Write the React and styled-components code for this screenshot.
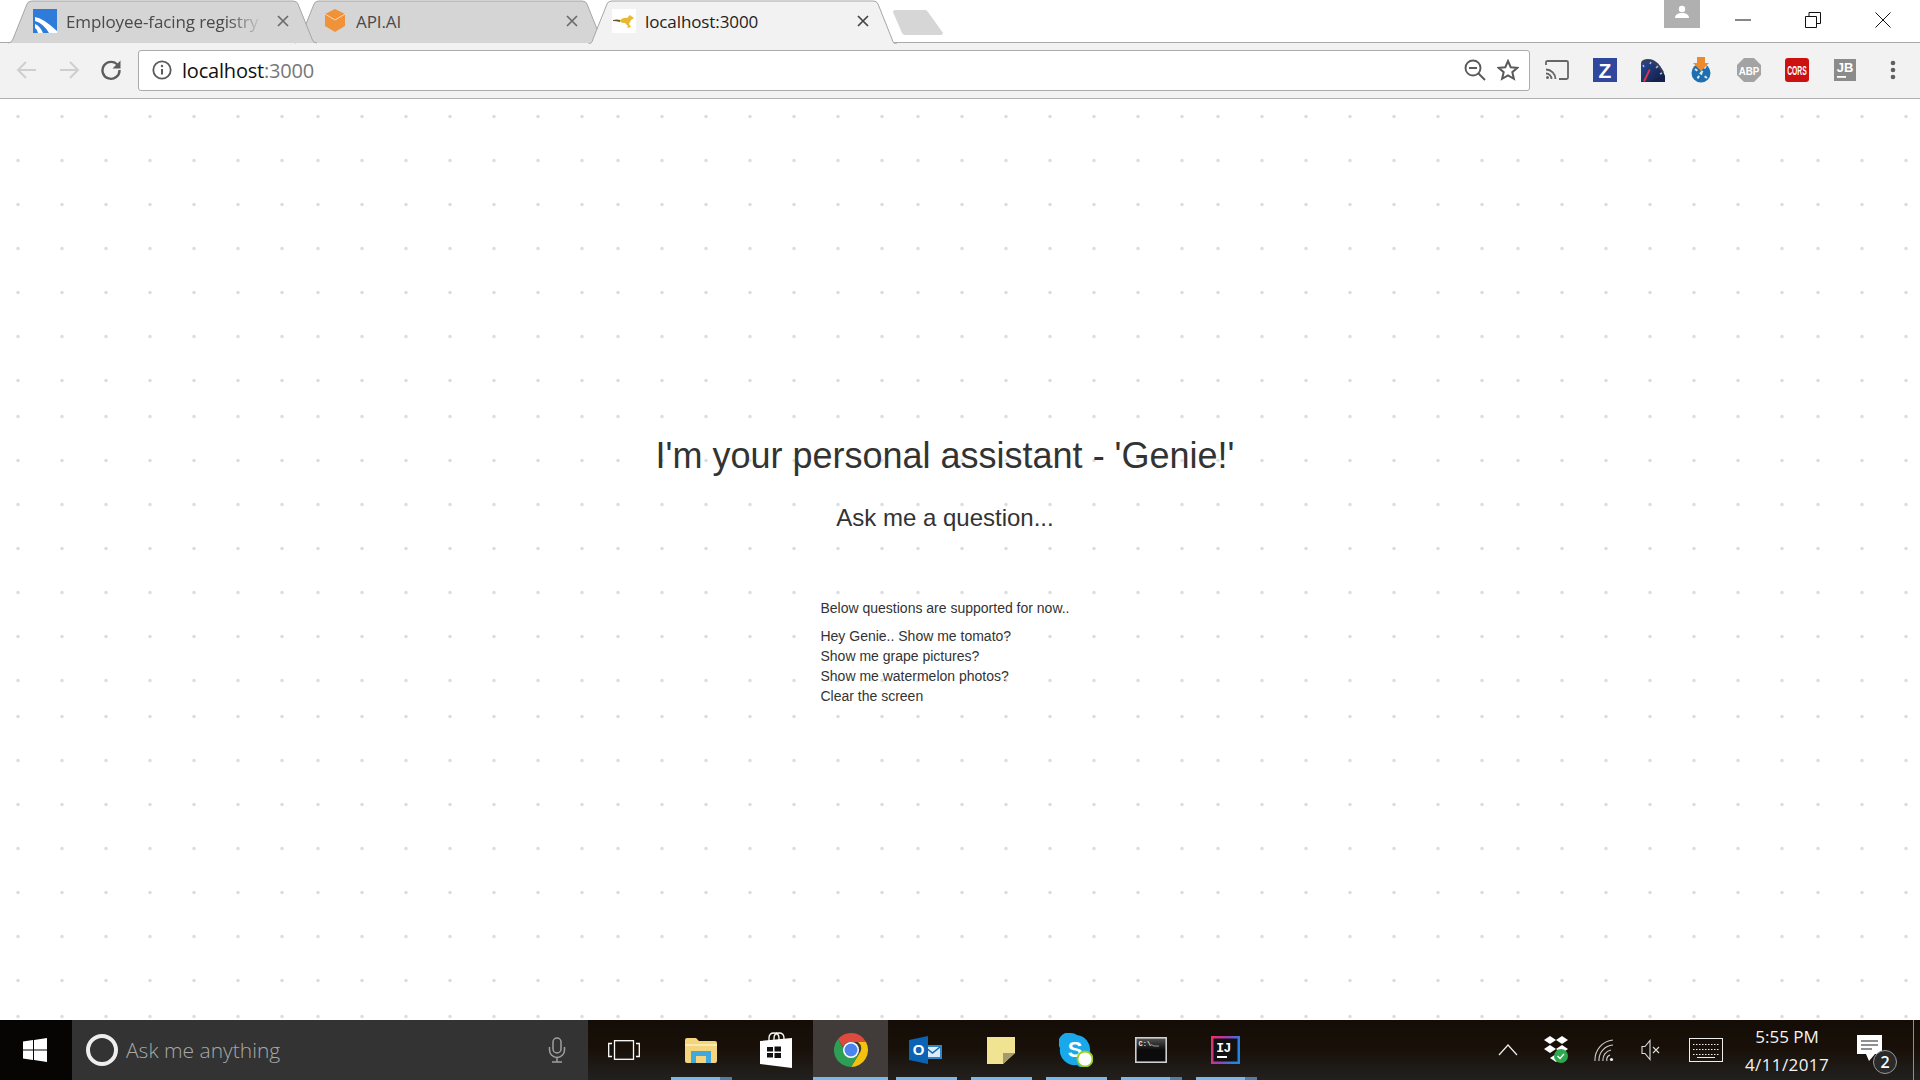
import React from "react";
import styled, { createGlobalStyle } from "styled-components";

const UI_FONT = `"Open Sans", "Noto Sans", sans-serif`;

const makeDotTile = () => {
  let dots = "";
  for (let i = 0; i < 7; i++) {
    for (let j = 0; j < 7; j++) {
      dots += `<circle cx='${18 + 44 * i}' cy='${17.5 + 44 * j}' r='1.7' fill='%23dcdcdc'/>`;
    }
  }
  return `url("data:image/svg+xml,<svg xmlns='http://www.w3.org/2000/svg' width='300' height='300'>${dots}</svg>")`;
};

const tabs = [
  { title: "Employee-facing registry", width: 309, overlap: 0, pad: 25, layer: 2, fade: true, icon: "registry" },
  { title: "API.AI", width: 311, overlap: -22, pad: 28, layer: 1, icon: "api" },
  { title: "localhost:3000", width: 309, overlap: -18, pad: 24, layer: 3, active: true, icon: "roo" },
];

const questions = [
  "Hey Genie.. Show me tomato?",
  "Show me grape pictures?",
  "Show me watermelon photos?",
  "Clear the screen",
];

const App = () => {
  return (
    <>
      <GlobalStyle />
      <Screen>
        <TabStrip>
          {tabs.map((tab) => (
            <Tab key={tab.title} $width={tab.width} $overlap={tab.overlap} $pad={tab.pad} $layer={tab.layer}>
              <TabShape width={tab.width} active={tab.active} />
              <TabIcon>
                <Favicon name={tab.icon} />
              </TabIcon>
              <TabTitle $fade={tab.fade} $active={tab.active}>{tab.title}</TabTitle>
              <TabClose $active={tab.active}>
                <svg width="12" height="12" viewBox="0 0 12 12">
                  <path d="M1 1l10 10M11 1L1 11" stroke="currentColor" strokeWidth="1.7" />
                </svg>
              </TabClose>
            </Tab>
          ))}
          <NewTab>
            <svg width="50" height="26" viewBox="0 0 50 26">
              <path d="M2 0H32Q34 0 35 2L50 23Q50 25 48 25H12Q10 25 9 23L0 2Q0 0 2 0Z" fill="#d6d6d6" />
            </svg>
          </NewTab>
          <WindowArea>
            <Avatar>
              <svg width="16" height="14" viewBox="0 0 16 14">
                <circle cx="8" cy="4" r="3.2" fill="#fff" />
                <path d="M1 13c0-3.5 3-5 7-5s7 1.500 7 5z" fill="#fff" />
              </svg>
            </Avatar>
            <WindowButton>
              <svg width="16" height="2" viewBox="0 0 16 2"><path d="M0 1h16" stroke="#111" strokeWidth="1" /></svg>
            </WindowButton>
            <WindowButton>
              <svg width="16" height="16" viewBox="0 0 16 16" fill="none" stroke="#111">
                <path d="M.5 4.500h11v11H.5z" />
                <path d="M4 4.500V.5h11.500v11H11.500" />
              </svg>
            </WindowButton>
            <WindowButton>
              <svg width="16" height="16" viewBox="0 0 16 16"><path d="M.5.5l15 15M15.500.5l-15 15" stroke="#111" /></svg>
            </WindowButton>
          </WindowArea>
        </TabStrip>

        <Toolbar>
          <NavButton>
            <svg width="22" height="20" viewBox="0 0 22 20" fill="none" stroke="#cfcfcf" strokeWidth="2">
              <path d="M20 10H2M10 2l-8 8 8 8" />
            </svg>
          </NavButton>
          <NavButton>
            <svg width="22" height="20" viewBox="0 0 22 20" fill="none" stroke="#cfcfcf" strokeWidth="2">
              <path d="M2 10h18M12 2l8 8-8 8" />
            </svg>
          </NavButton>
          <NavButton>
            <svg width="22" height="22" viewBox="0 0 22 22" fill="none">
              <path d="M18 6.500A8.500 8.500 0 1 0 19.500 11" stroke="#5c5c5c" strokeWidth="2.400" />
              <path d="M20.500 1.500v8h-8z" fill="#5c5c5c" />
            </svg>
          </NavButton>
          <AddressBar>
            <InfoIcon>
              <svg width="20" height="20" viewBox="0 0 20 20" fill="none">
                <circle cx="10" cy="10" r="8.700" stroke="#5a5a5a" strokeWidth="1.800" />
                <path d="M10 9v5.500" stroke="#5a5a5a" strokeWidth="2" />
                <circle cx="10" cy="6" r="1.200" fill="#5a5a5a" />
              </svg>
            </InfoIcon>
            <AddressText>localhost<span>:3000</span></AddressText>
            <AddressAction>
              <svg width="22" height="22" viewBox="0 0 22 22" fill="none" stroke="#5a5a5a" strokeWidth="1.900">
                <circle cx="9" cy="9" r="7.500" />
                <path d="M5 9h8M14.500 14.500L21 21" />
              </svg>
            </AddressAction>
            <AddressAction>
              <svg width="22" height="22" viewBox="0 0 22 22" fill="none" stroke="#5a5a5a" strokeWidth="2">
                <path d="M11 2l2.700 6.200 6.700.6-5.100 4.400 1.600 6.600L11 16.300 5.100 19.800l1.600-6.600L1.600 8.800l6.700-.6z" />
              </svg>
            </AddressAction>
          </AddressBar>
          <Extensions>
            <ExtensionButton>
              <svg width="24" height="20" viewBox="0 0 24 20" fill="none" stroke="#666" strokeWidth="1.800">
                <path d="M1 5V2.500Q1 1 2.500 1h19Q23 1 23 2.500v15q0 1.500-1.500 1.500H14" />
                <path d="M1 9.500A9.500 9.500 0 0 1 10.500 19M1 13.500A5.500 5.500 0 0 1 6.500 19" />
                <circle cx="2.500" cy="17.500" r="1.500" fill="#666" stroke="none" />
              </svg>
            </ExtensionButton>
            <ExtensionButton>
              <svg width="24" height="24" viewBox="0 0 24 24">
                <rect width="24" height="24" fill="#2f479c" />
                <text x="12" y="20" textAnchor="middle" fontFamily="Liberation Sans" fontWeight="700" fontSize="21" fill="#fff">Z</text>
              </svg>
            </ExtensionButton>
            <ExtensionButton>
              <svg width="24" height="24" viewBox="0 0 24 24">
                <defs>
                  <linearGradient id="dialFill" x1="0" y1="0" x2="1" y2="1">
                    <stop offset="0" stopColor="#2a4a9a" />
                    <stop offset="1" stopColor="#0f1a3d" />
                  </linearGradient>
                </defs>
                <path d="M0 24V5Q1 1 7 1 18 1 24 18v6z" fill="url(#dialFill)" />
                <path d="M1 4Q12 0 22 14" stroke="#3c3f4c" strokeWidth="2" fill="none" />
                <path d="M2 23l6-12 1.500 1L4 24z" fill="#dc3345" />
                <path d="M9 6l1-2M15 10l2-2M19 16l2-1M3 9L2 7" stroke="#a9bce4" strokeWidth="1.600" />
                <path d="M9 24h15v-3Q15 19 9 24z" fill="#16204a" />
              </svg>
            </ExtensionButton>
            <ExtensionButton>
              <svg width="20" height="26" viewBox="0 0 20 26">
                <circle cx="10" cy="16" r="9.500" fill="#1e6fb0" />
                <path d="M4 12l12 9M15 9l-9 13" stroke="#d8e8f4" strokeWidth="2" strokeDasharray="3 3" />
                <path d="M6 0h8v6h4l-8 8-8-8h4z" fill="#ee8a2d" />
              </svg>
            </ExtensionButton>
            <ExtensionButton>
              <svg width="24" height="24" viewBox="0 0 24 24">
                <path d="M7 0h10l7 7v10l-7 7H7l-7-7V7z" fill="#a3a3a3" />
                <text transform="translate(12 16.500) scale(0.85 1)" textAnchor="middle" fontFamily="Liberation Sans" fontWeight="700" fontSize="11.500" fill="#fff">ABP</text>
              </svg>
            </ExtensionButton>
            <ExtensionButton>
              <svg width="24" height="24" viewBox="0 0 24 24">
                <rect width="24" height="24" rx="3" fill="#cc1111" />
                <text transform="translate(12 17) scale(0.52 1)" textAnchor="middle" fontFamily="Liberation Sans" fontWeight="700" fontSize="13" fill="#fff">CORS</text>
              </svg>
            </ExtensionButton>
            <ExtensionButton>
              <svg width="22" height="22" viewBox="0 0 22 22">
                <rect width="22" height="22" fill="#8b8b8b" />
                <text x="11" y="13" textAnchor="middle" fontFamily="Liberation Sans" fontWeight="700" fontSize="13" fill="#fff">JB</text>
                <rect x="3" y="17" width="9" height="1.800" fill="#fff" />
              </svg>
            </ExtensionButton>
            <ExtensionButton>
              <svg width="6" height="20" viewBox="0 0 6 20">
                <circle cx="3" cy="3" r="2.300" fill="#5f5f5f" />
                <circle cx="3" cy="10" r="2.300" fill="#5f5f5f" />
                <circle cx="3" cy="17" r="2.300" fill="#5f5f5f" />
              </svg>
            </ExtensionButton>
          </Extensions>
        </Toolbar>

        <Main>
          <Heading>I'm your personal assistant - 'Genie!'</Heading>
          <SubHeading>Ask me a question...</SubHeading>
          <Supported>
            <SupportedLead>Below questions are supported for now..</SupportedLead>
            {questions.map((q) => (
              <SupportedItem key={q}>{q}</SupportedItem>
            ))}
          </Supported>
        </Main>

        <Taskbar>
          <StartButton>
            <svg width="24" height="24" viewBox="0 0 24 24" fill="#fff">
              <path d="M0 3.400l10-1.400v9.500H0zM11 1.900L24 0v11.500H11zM0 12.500h10V22L0 20.600zM11 12.500h13V24l-13-1.900z" />
            </svg>
          </StartButton>
          <SearchBox>
            <Cortana />
            <SearchText>Ask me anything</SearchText>
            <MicIcon>
              <svg width="18" height="26" viewBox="0 0 18 26" fill="none" stroke="#a0a0a0" strokeWidth="1.500">
                <rect x="5" y="1" width="8" height="15" rx="4" />
                <path d="M1.500 10v3a7.500 7.500 0 0 0 15 0v-3M9 20.500V25M4 25h10" />
              </svg>
            </MicIcon>
          </SearchBox>
          <AppButton $shift={-2}>
            <svg width="32" height="20" viewBox="0 0 32 20" fill="none" stroke="#fff" strokeWidth="1.300">
              <rect x="6.500" y=".7" width="19" height="18.600" />
              <path d="M4 3.500H.7v13H4M28 3.500h3.300v13H28" />
            </svg>
          </AppButton>
          <AppButton $running $stacked>
            <svg width="32" height="26" viewBox="0 0 32 26">
              <path d="M0 3Q0 1 2 1h9l3 3h16q2 0 2 2v18q0 2-2 2H2q-2 0-2-2z" fill="#f4d47c" />
              <path d="M0 7h32v2H0z" fill="#fbe9ae" />
              <path d="M6 14h20v12h-5v-7H11v7H6z" fill="#3fa9dd" />
            </svg>
          </AppButton>
          <AppButton>
            <svg width="32" height="36" viewBox="0 0 32 36">
              <path d="M9 9V6q0-5 5-5t5 5v3M14 8V6q0-5 5-5t5 5v3" fill="none" stroke="#fff" strokeWidth="1.300" />
              <path d="M0 9l32-3v30L0 32z" fill="#fff" />
              <path d="M7 15h6v4.500H7zM14.500 14.500h6.500v5h-6.500zM7 21h6v4.500H7zM14.500 21h6.500v5h-6.500z" fill="#111" />
            </svg>
          </AppButton>
          <AppButton $active $running>
            <svg width="34" height="34" viewBox="0 0 34 34">
              <path d="M17 0a17 17 0 0 1 15 9H17a8 8 0 0 0-8 5L4 6a17 17 0 0 1 13-6z" fill="#dd4b3e" />
              <path d="M32 9a17 17 0 0 1-15 25l8-13a8 8 0 0 0-1-12z" fill="#f4c20d" />
              <path d="M17 34A17 17 0 0 1 4 6l8 14a8 8 0 0 0 13 1l-8 13z" fill="#2f9e55" />
              <circle cx="17" cy="17" r="8" fill="#fff" />
              <circle cx="17" cy="17" r="6.500" fill="#4a84ec" />
            </svg>
          </AppButton>
          <AppButton $running>
            <svg width="33" height="28" viewBox="0 0 33 28">
              <path d="M14 9h19v14H14z" fill="#2e86c9" />
              <path d="M16 11h15v10H16z" fill="#d8ecfa" />
              <path d="M16 11l7.500 6 7.500-6" fill="none" stroke="#1766a8" strokeWidth="1.500" />
              <path d="M0 4l19-4v28L0 24z" fill="#0b63b4" />
              <text x="9.500" y="19" textAnchor="middle" fontFamily="Liberation Sans" fontWeight="700" fontSize="15" fill="#fff">O</text>
            </svg>
          </AppButton>
          <AppButton $running>
            <svg width="28" height="27" viewBox="0 0 28 27">
              <path d="M0 0h28v16L16 27H0z" fill="#f0e391" />
              <path d="M28 16H16v11z" fill="#a49a6a" />
            </svg>
          </AppButton>
          <AppButton $running>
            <svg width="34" height="34" viewBox="0 0 34 34">
              <path d="M12 0a10 10 0 0 1 6 2 15 15 0 0 1 13 17 9 9 0 0 1-13 13A15 15 0 0 1 1 15 10 10 0 0 1 12 0z" fill="#19a9ea" />
              <text x="16" y="24" textAnchor="middle" fontFamily="Liberation Sans" fontWeight="700" fontSize="22" fill="#fff">S</text>
              <circle cx="26" cy="26" r="7.500" fill="#fdfdfd" stroke="#9acd1e" strokeWidth="1.800" />
            </svg>
          </AppButton>
          <AppButton $running $stacked>
            <svg width="32" height="26" viewBox="0 0 32 26">
              <defs>
                <linearGradient id="cmdFill" x1="0" y1="0" x2="0" y2="1">
                  <stop offset="0" stopColor="#555" />
                  <stop offset="0.500" stopColor="#0b0b0b" />
                  <stop offset="1" stopColor="#0b0b0b" />
                </linearGradient>
              </defs>
              <rect x=".8" y=".8" width="30.400" height="24.400" fill="url(#cmdFill)" stroke="#cfcfcf" strokeWidth="1.600" />
              <text x="3.500" y="9" fontFamily="Liberation Mono" fontWeight="700" fontSize="7" fill="#e8e8e8">C:\</text>
              <path d="M16 7.500l3 1.500h5" stroke="#999" fill="none" />
            </svg>
          </AppButton>
          <AppButton $running $stacked>
            <svg width="29" height="28" viewBox="0 0 29 28">
              <defs>
                <linearGradient id="ijFrame" x1="0" y1="0" x2="1" y2="0.300">
                  <stop offset="0" stopColor="#f0305f" />
                  <stop offset="0.500" stopColor="#a33bb0" />
                  <stop offset="1" stopColor="#1f86e8" />
                </linearGradient>
              </defs>
              <rect width="29" height="28" fill="url(#ijFrame)" />
              <rect x="2.500" y="2.500" width="24" height="23" fill="#111" />
              <text x="12.500" y="16" textAnchor="middle" fontFamily="Liberation Mono" fontWeight="700" fontSize="13" letterSpacing="-0.5" fill="#fff">IJ</text>
              <rect x="6" y="20" width="10" height="2" fill="#fff" />
            </svg>
          </AppButton>
          <Tray>
            <TrayItem $width={48}>
              <svg width="20" height="12" viewBox="0 0 20 12" fill="none" stroke="#eee" strokeWidth="1.200"><path d="M1 11L10 1l9 10" /></svg>
            </TrayItem>
            <TrayItem $width={48}>
              <svg width="26" height="28" viewBox="0 0 26 28">
                <path d="M7 0l6 4-6 4-6-4zM19 0l6 4-6 4-6-4zM7 9l6 4-6 4-6-4zM19 9l-6 4 6 4 6-4zM13 18l6 4-6 4-6-4z" fill="#fff" />
                <circle cx="18" cy="20" r="7" fill="#2ea84f" />
                <path d="M14.500 20l2.500 2.500 4-4.500" fill="none" stroke="#fff" strokeWidth="1.400" />
              </svg>
            </TrayItem>
            <TrayItem $width={48}>
              <svg width="20" height="24" viewBox="0 0 20 24" fill="none" stroke="#ccc" strokeWidth="1.100">
                <path d="M1 23A20 20 0 0 1 19 2M5 23A15 15 0 0 1 19 7M9 23A10 10 0 0 1 17 12M13 23a5 5 0 0 1 3-6" />
                <circle cx="17.500" cy="21.500" r="1.600" fill="#eee" stroke="none" />
              </svg>
            </TrayItem>
            <TrayItem $width={46}>
              <svg width="20" height="22" viewBox="0 0 20 22" fill="none" stroke="#ddd" strokeWidth="1.100">
                <path d="M1 7.500h3L9 1.500v19l-5-6H1zM12 8l6 6M18 8l-6 6" />
              </svg>
            </TrayItem>
            <TrayItem $width={64}>
              <svg width="34" height="24" viewBox="0 0 34 24" fill="none" stroke="#eee">
                <rect x=".5" y=".5" width="33" height="23" />
                <path d="M4 6.500h26M4 11.500h26M4 16.500h26" strokeDasharray="1.500 1.500" />
                <path d="M8 19.500h18" />
              </svg>
            </TrayItem>
            <Clock>
              <ClockTime>5:55 PM</ClockTime>
              <ClockDate>4/11/2017</ClockDate>
            </Clock>
            <TrayItem $width={68}>
              <Notification>
                <svg width="26" height="30" viewBox="0 0 26 30">
                  <path d="M0 0h25v19h-6l-1 0-6 7-3-7H0z" fill="#fff" />
                  <path d="M4 6h17M4 10h17M4 14h11" stroke="#222" strokeWidth="1.200" />
                </svg>
                <NotificationBadge>2</NotificationBadge>
              </Notification>
            </TrayItem>
          </Tray>
        </Taskbar>
      </Screen>
    </>
  );
};

const TabShape = ({ width, active }) => {
  const bottom = active ? 44 : 43;
  const right = width;
  const d = `M0 ${bottom} Q4 ${bottom} 5 39 L19 4 Q20 1 24 1 H${right - 24} Q${right - 20} 1 ${right - 19} 4 L${right - 5} 39 Q${right - 4} ${bottom} ${right} ${bottom}`;
  return (
    <TabSvg width={width} height="44" viewBox={`0 0 ${width} 44`}>
      <path d={d} fill={active ? "#f2f2f2" : "#d5d5d5"} stroke="#a6a6a6" strokeWidth="1" />
    </TabSvg>
  );
};

const Favicon = ({ name }) => {
  if (name === "registry") {
    return (
      <svg width="24" height="24" viewBox="0 0 24 24">
        <rect width="24" height="24" fill="#2f7bd9" />
        <path d="M2 8Q10 9 24 22V24H16Q10 14 2 12z" fill="#fff" />
        <path d="M2 15Q7 17 10 24H5Q4 20 2 19z" fill="#fff" />
      </svg>
    );
  }
  if (name === "api") {
    return (
      <svg width="22" height="24" viewBox="0 0 22 24">
        <path d="M11 0l10 5v12l-10 6L1 17V5z" fill="#f0923a" />
        <path d="M1 5l10 6 10-6" fill="none" stroke="#fdd9b0" strokeWidth="1" />
      </svg>
    );
  }
  return (
    <svg width="24" height="24" viewBox="0 0 24 24">
      <rect width="24" height="24" fill="#fff" />
      <path d="M8 11Q12 8 15 9l3-3 1 1 3 2-3 2-2 4 2 3-4 1 1-2-3-3Q9 14 8 12z" fill="#e8b82e" />
      <path d="M1 11Q5 10 8 11L8 13Q4 12 1 12z" fill="#6b5a2a" />
    </svg>
  );
};

const GlobalStyle = createGlobalStyle`
  html, body {
    margin: 0;
    padding: 0;
    background: #fff;
  }
`;

const Screen = styled.div`
  width: 1920px;
  height: 1080px;
  display: flex;
  flex-direction: column;
  overflow: hidden;
  font-family: ${UI_FONT};
`;

const TabStrip = styled.div`
  height: 42px;
  flex: none;
  display: flex;
  align-items: flex-start;
  padding-left: 8px;
  background: #fff;
  border-bottom: 1px solid #aaa;
`;

const Tab = styled.div`
  position: relative;
  z-index: ${(p) => p.$layer};
  flex: none;
  width: ${(p) => p.$width}px;
  height: 44px;
  margin-left: ${(p) => p.$overlap}px;
  padding: 0 28px 2px ${(p) => p.$pad}px;
  box-sizing: border-box;
  display: flex;
  align-items: center;
`;

const TabSvg = styled.svg`
  position: absolute;
  top: 0;
  left: 0;
`;

const TabIcon = styled.span`
  position: relative;
  width: 24px;
  height: 24px;
  flex: none;
  display: flex;
  align-items: center;
  justify-content: center;
`;

const TabTitle = styled.span`
  position: relative;
  margin-left: 9px;
  font-size: 17px;
  letter-spacing: -0.1px;
  white-space: nowrap;
  overflow: hidden;
  flex: 1;
  color: ${(p) => (p.$active ? "#222" : "#4a4a4a")};
  ${(p) => p.$fade && "mask-image: linear-gradient(to right, #000 82%, transparent 100%);"}
`;

const TabClose = styled.span`
  position: relative;
  flex: none;
  display: flex;
  margin-left: 14px;
  color: ${(p) => (p.$active ? "#444" : "#6b6b6b")};
`;

const NewTab = styled.div`
  flex: none;
  display: flex;
  position: relative;
  z-index: 1;
  margin: 10px 0 0 -4px;
`;

const WindowArea = styled.div`
  margin-left: auto;
  display: flex;
  align-items: flex-start;
  padding-right: 2px;
`;

const Avatar = styled.div`
  width: 36px;
  height: 28px;
  margin-right: 8px;
  background: #b0b0b0;
  display: flex;
  align-items: center;
  justify-content: center;
  padding-bottom: 4px;
  box-sizing: border-box;
`;

const WindowButton = styled.div`
  width: 70px;
  height: 40px;
  display: flex;
  align-items: center;
  justify-content: center;
`;

const Toolbar = styled.div`
  height: 56px;
  flex: none;
  box-sizing: border-box;
  padding: 0 0 1px 6px;
  display: flex;
  align-items: center;
  background: #f2f2f2;
  border-bottom: 1px solid #b0b0b0;
`;

const NavButton = styled.div`
  width: 42px;
  height: 42px;
  flex: none;
  display: flex;
  align-items: center;
  justify-content: center;
`;

const AddressBar = styled.div`
  flex: 1;
  height: 41px;
  margin: 0 3px 0 6px;
  box-sizing: border-box;
  background: #fff;
  border: 1px solid #ababab;
  border-radius: 3px;
  display: flex;
  align-items: center;
  padding: 0 5px 0 13px;
`;

const InfoIcon = styled.span`
  display: flex;
  flex: none;
`;

const AddressText = styled.div`
  flex: 1;
  margin-left: 10px;
  font-size: 20px;
  letter-spacing: -0.2px;
  color: #111;

  span {
    color: #777;
  }
`;

const AddressAction = styled.span`
  width: 33px;
  display: flex;
  justify-content: center;
  flex: none;
`;

const Extensions = styled.div`
  display: flex;
  flex: none;
  padding-right: 3px;
`;

const ExtensionButton = styled.div`
  width: 48px;
  height: 42px;
  display: flex;
  align-items: center;
  justify-content: center;
`;

const Main = styled.main`
  flex: 1;
  display: flex;
  flex-direction: column;
  align-items: center;
  box-sizing: border-box;
  padding: 337px 30px 0 0;
  background-color: #fff;
  background-image: ${makeDotTile()};
  background-size: 300px 300px;
  font-family: "Liberation Sans", Arial, sans-serif;
  color: #333;
`;

const Heading = styled.h2`
  margin: 0;
  font-size: 36px;
  line-height: 40px;
  font-weight: 400;
`;

const SubHeading = styled.h3`
  margin: 27px 0 0;
  font-size: 24px;
  line-height: 30px;
  font-weight: 400;
`;

const Supported = styled.div`
  margin-top: 65px;
  font-size: 14px;
  line-height: 20px;
`;

const SupportedLead = styled.p`
  margin: 0 0 8px;
`;

const SupportedItem = styled.div``;

const Taskbar = styled.footer`
  height: 60px;
  flex: none;
  display: flex;
  background: linear-gradient(to bottom, #140d07 0%, #181008 45%, #22201e 100%);
`;

const StartButton = styled.div`
  width: 72px;
  flex: none;
  display: flex;
  align-items: center;
  justify-content: center;
  padding-right: 2px;
  box-sizing: border-box;
  background: #070504;
`;

const SearchBox = styled.div`
  width: 516px;
  flex: none;
  display: flex;
  align-items: center;
  box-sizing: border-box;
  padding: 0 18px 0 14px;
  background: #333;
`;

const Cortana = styled.div`
  width: 32px;
  height: 32px;
  flex: none;
  box-sizing: border-box;
  border: 4px solid #eee;
  border-radius: 50%;
`;

const SearchText = styled.span`
  flex: 1;
  margin-left: 8px;
  font-size: 21px;
  font-weight: 300;
  color: #a8a8a8;
`;

const MicIcon = styled.span`
  display: flex;
  margin-right: 4px;
`;

const AppButton = styled.div`
  position: relative;
  width: 75px;
  flex: none;
  display: flex;
  align-items: center;
  justify-content: center;
  box-sizing: border-box;
  padding-right: ${(p) => (p.$shift ? -p.$shift * 2 : 0)}px;
  background: ${(p) => (p.$active ? "#413c39" : "transparent")};

  ${(p) =>
    p.$running &&
    `&::after {
      content: "";
      position: absolute;
      bottom: 0;
      height: 3px;
      left: ${p.$active ? 0 : 8}px;
      right: ${p.$active ? 0 : 6}px;
      background: ${
        p.$stacked
          ? "linear-gradient(to right, #76b9ed 0, #76b9ed 80%, #4f7fa6 80%)"
          : "#76b9ed"
      };
    }`}
`;

const Tray = styled.div`
  margin: 0 6px 0 auto;
  display: flex;
  align-items: stretch;
  box-sizing: border-box;
  padding-right: 9px;
  color: #fff;
  border-right: 1px solid #8f8f8f;
`;

const TrayItem = styled.div`
  width: ${(p) => p.$width}px;
  flex: none;
  display: flex;
  align-items: center;
  justify-content: center;
`;

const Clock = styled.div`
  width: 98px;
  flex: none;
  display: flex;
  flex-direction: column;
  align-items: center;
  justify-content: center;
  gap: 5px;
  line-height: 23px;
  color: #f4f4f4;
  white-space: nowrap;
`;

const ClockTime = styled.span`
  font-size: 17px;
`;

const ClockDate = styled.span`
  font-size: 17px;
  letter-spacing: 0.4px;
`;

const Notification = styled.div`
  position: relative;
  display: flex;
`;

const NotificationBadge = styled.span`
  position: absolute;
  right: -14px;
  bottom: -9px;
  width: 24px;
  height: 24px;
  box-sizing: border-box;
  border: 1px solid #999;
  border-radius: 50%;
  background: #2a2a2a;
  color: #fff;
  font-size: 16px;
  font-weight: 600;
  display: flex;
  align-items: center;
  justify-content: center;
`;

export default App;
